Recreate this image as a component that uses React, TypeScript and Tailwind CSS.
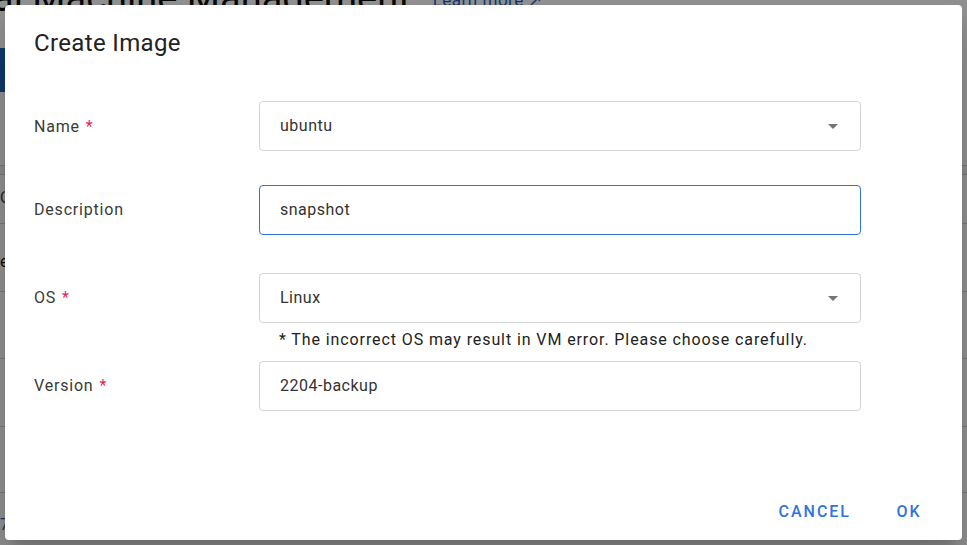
import React from "react";

const font = { fontFamily: "Roboto, 'Noto Sans', sans-serif" };

function Caret() {
  return (
    <svg width="10" height="5" viewBox="0 0 10 5" className="shrink-0">
      <path d="M0 0 L10 0 L5 5 Z" fill="#757575" />
    </svg>
  );
}

function Req() {
  return <span className="ml-[6px] text-[#ec1f5a]">*</span>;
}

function Box({
  value,
  select,
  focused,
}: {
  value: string;
  select?: boolean;
  focused?: boolean;
}) {
  return (
    <div
      className={`flex h-[50px] w-[602px] items-center rounded-[4px] border bg-white pl-[20px] pr-[22px] ${
        focused ? "border-[#2f74de]" : "border-[#d3d3d3]"
      }`}
    >
      <span className="flex-1 text-[16px] leading-[24px] tracking-[0.5px] text-[#333333]">{value}</span>
      {select && <Caret />}
    </div>
  );
}

function Row({ label, children }: { label: React.ReactNode; children: React.ReactNode }) {
  return (
    <div className="flex items-center">
      <div className="w-[225px] text-[16px] leading-[24px] tracking-[0.8px] text-[#3a3a3a]">{label}</div>
      {children}
    </div>
  );
}

export default function App() {
  return (
    <div className="relative h-[545px] w-[967px] overflow-hidden bg-white" style={font}>
      {/* background page */}
      <div className="flex flex-col">
        <div className="-ml-[7px] -mt-[24px] flex items-end gap-[22px]">
          <span className="text-[38px] leading-[44px] text-[#111]">al Machine Management</span>
          <span className="mb-[7px] text-[17px] tracking-[0.5px] text-[#1e5fc8] underline">Learn more ↗</span>
        </div>
        <div className="mt-[28px] h-[44px] w-[60px] bg-[#1f63c6]" />
        <div className="mt-[73px] h-[10px] border-y border-[#cfcfcf] bg-[#f3f3f3]" />
        <div className="h-[49px] border-b border-[#d6d6d6] pt-[11px] text-[16px] text-[#444]">Q</div>
        <div className="h-[68px] border-b border-[#d6d6d6] pt-[26px] text-[16px] text-[#111]">e</div>
        <div className="h-[67px] border-b border-[#d6d6d6]" />
        <div className="h-[68px] border-b border-[#d6d6d6]" />
        <div className="h-[66px] border-b border-[#d6d6d6]" />
        <div className="pt-[20px] text-[16px] text-[#1e5fc8]">7</div>
      </div>

      {/* backdrop */}
      <div className="absolute inset-0 bg-black/[0.43]" />

      {/* dialog */}
      <div className="absolute left-[5px] top-[5px] flex h-[535px] w-[957px] flex-col rounded-[4px] bg-white shadow-[0_11px_15px_-7px_rgba(0,0,0,0.2),0_24px_38px_3px_rgba(0,0,0,0.14)]">
        <div className="pl-[29px] pt-[22px] text-[24px] font-normal leading-[32px] tracking-[0.35px] text-[#222222]">
          Create Image
        </div>

        <div className="mt-[42px] flex flex-col pl-[29px]">
          <Row
            label={
              <span className="relative top-[1px]">
                Name
                <Req />
              </span>
            }
          >
            <Box value="ubuntu" select />
          </Row>
          <div className="h-[34px]" />
          <Row label="Description">
            <Box value="snapshot" focused />
          </Row>
          <div className="h-[38px]" />
          <Row
            label={
              <>
                OS
                <Req />
              </>
            }
          >
            <Box value="Linux" select />
          </Row>
          <div className="flex">
            <div className="w-[225px]" />
            <div className="mb-[9px] mt-[5px] pl-[20px] text-[16px] leading-[24px] tracking-[0.9px] text-[#222222]">
              * The incorrect OS may result in VM error. Please choose carefully.
            </div>
          </div>
          <Row
            label={
              <>
                Version
                <Req />
              </>
            }
          >
            <Box value="2204-backup" />
          </Row>
        </div>

        <div className="mt-auto mb-[10px] flex h-[36px] items-center justify-end gap-[17px] pr-[22px]">
          <button className="px-[8px] text-[16px] font-medium uppercase tracking-[2px] text-[#2f74de]">
            Cancel
          </button>
          <button className="w-[64px] pl-[2px] text-center text-[16px] font-medium uppercase tracking-[2px] text-[#2f74de]">
            OK
          </button>
        </div>
      </div>
    </div>
  );
}
